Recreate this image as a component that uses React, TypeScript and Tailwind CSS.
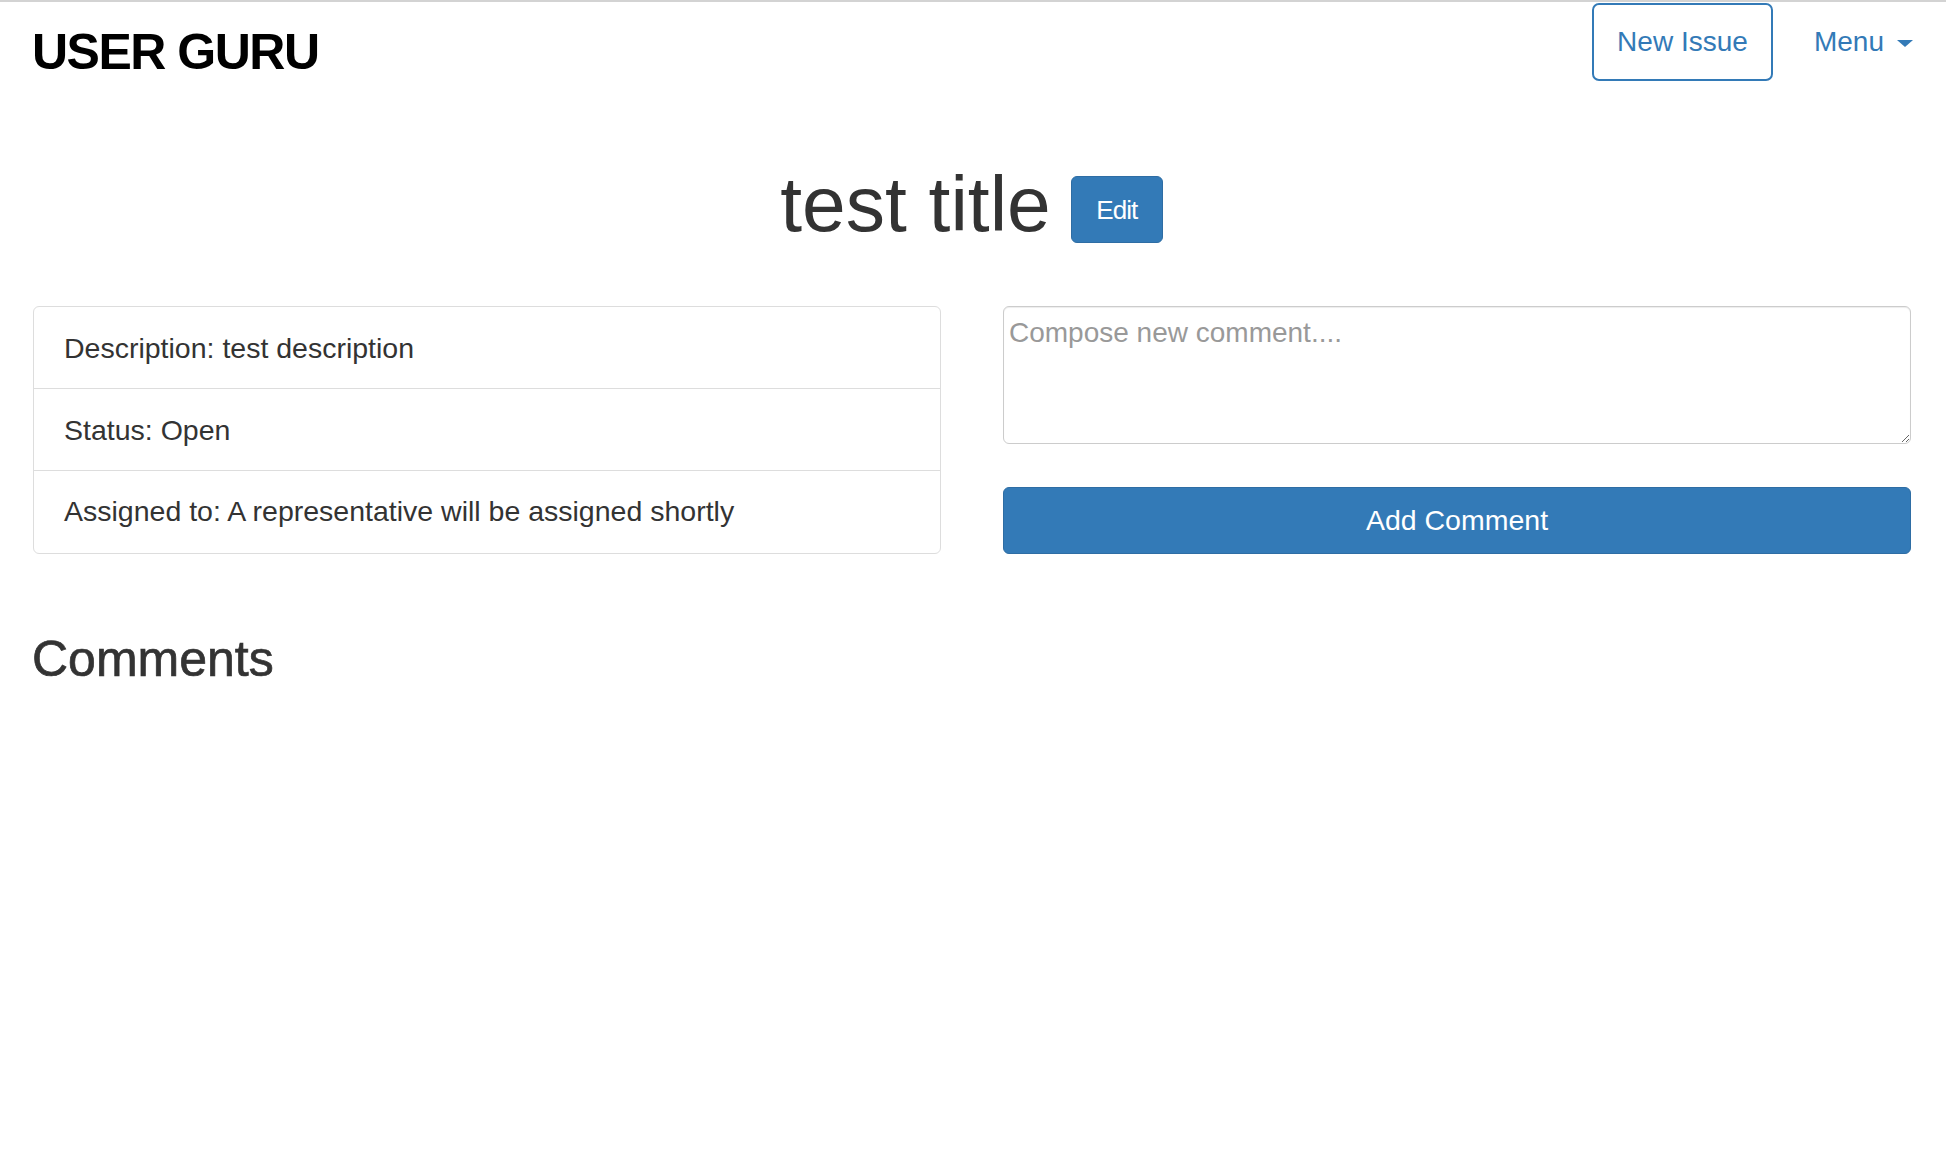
import { useState } from 'react';

const blue = '#337ab7';

function Header() {
  return (
    <header className="flex items-start justify-between pl-[32px] pr-[33px] pt-px">
      <h1 className="mt-[24px] text-[50px] font-bold leading-none tracking-[-1.5px] text-black">
        USER GURU
      </h1>
      <nav className="flex items-center">
        <button className="h-[78px] w-[181px] rounded-[7px] border-2 border-[#337ab7] bg-white text-[28px] leading-none text-[#337ab7]">
          New Issue
        </button>
        <button className="ml-[41px] flex items-center text-[28px] leading-none text-[#337ab7]">
          Menu
          <span className="ml-[13px] mt-[2px] h-0 w-0 border-l-[8px] border-r-[8px] border-t-[7px] border-l-transparent border-r-transparent border-t-[#337ab7]" />
        </button>
      </nav>
    </header>
  );
}

function IssueDetails() {
  const rows = [
    'Description: test description',
    'Status: Open',
    'Assigned to: A representative will be assigned shortly',
  ];
  return (
    <ul className="overflow-hidden rounded-[6px] border border-[#dddddd]">
      {rows.map((row, i) => (
        <li
          key={row}
          className={`flex h-[81.5px] items-center px-[30px] pt-[2px] text-[28.5px] text-[#333333] ${
            i > 0 ? 'border-t border-[#dddddd]' : ''
          }`}
        >
          {row}
        </li>
      ))}
    </ul>
  );
}

function CommentForm() {
  const [text, setText] = useState('');
  return (
    <div className="flex flex-col">
      <textarea
        value={text}
        onChange={(e) => setText(e.target.value)}
        placeholder="Compose new comment...."
        className="h-[138px] w-full rounded-[6px] border border-[#cccccc] px-[5px] pt-[6px] text-[28px] leading-[1.43] text-[#555555] shadow-[inset_0_1px_1px_rgba(0,0,0,0.075)] outline-none placeholder:text-[#999999]"
      />
      <button className="mt-[43px] h-[67px] w-full rounded-[6px] border border-[#2e6da4] bg-[#337ab7] pt-px text-[28.5px] leading-none text-white">
        Add Comment
      </button>
    </div>
  );
}

export default function App() {
  return (
    <div
      className="min-h-screen border-t-2 border-[#d3d3d3] bg-white"
      style={{ fontFamily: '"Liberation Sans", Arial, Helvetica, sans-serif' }}
    >
      <Header />

      <section className="flex items-start justify-center gap-[20px] pt-[84px]">
        <h2 className="-ml-[3px] text-[78.5px] leading-none text-[#333333]">test title</h2>
        <button
          className="mt-[11px] h-[67px] w-[92px] rounded-[6px] border border-[#2e6da4] text-[26px] leading-none tracking-[-1px] text-white"
          style={{ backgroundColor: blue }}
        >
          Edit
        </button>
      </section>

      <main className="mt-[62px] grid grid-cols-2 gap-[62px] pl-[33px] pr-[35px]">
        <IssueDetails />
        <CommentForm />
      </main>

      <h3 className="mt-[80px] pl-[32px] text-[50px] leading-none text-[#333333] [-webkit-text-stroke:0.7px_#333333]">
        Comments
      </h3>
    </div>
  );
}
